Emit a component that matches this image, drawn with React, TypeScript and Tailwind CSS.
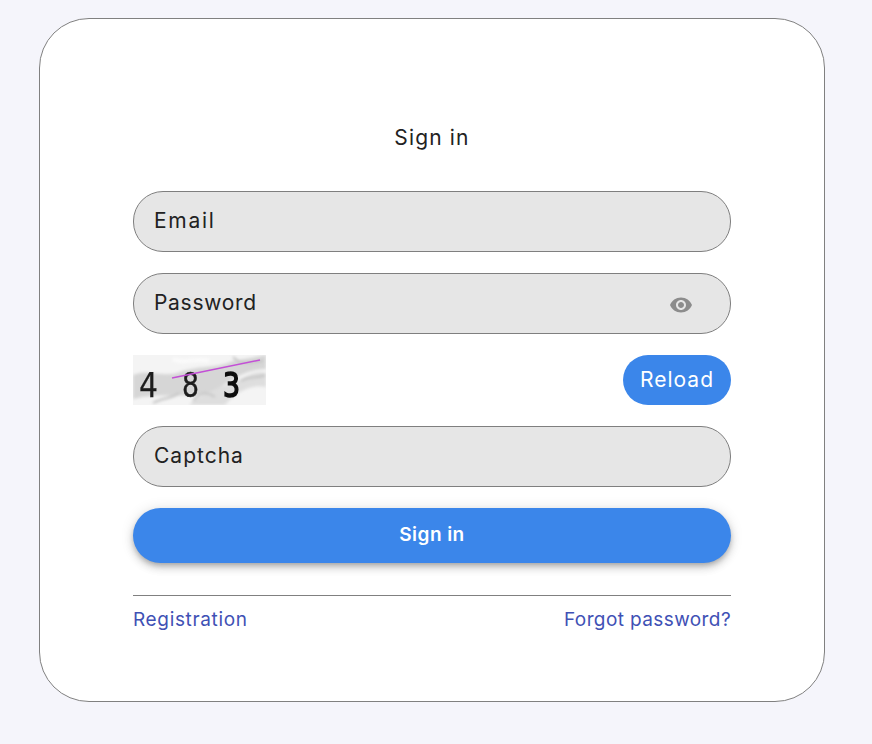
function Field({ label, spacing, eye }: { label: string; spacing: string; eye?: boolean }) {
  return (
    <div className="h-[61px] w-full rounded-[30px] border border-[#7f7f7f] bg-[#e6e6e6] pl-5 pr-9 flex items-center justify-between text-[21px] text-[#222222]">
      <span className={`-mt-[2px] ${spacing}`}>{label}</span>
      {eye && (
        <svg viewBox="0 0 24 24" className="h-6 w-6 fill-[#8c8c8c] mt-[3px] mr-[1px]">
          <path d="M12 4.5C7 4.5 2.73 7.61 1 12c1.73 4.39 6 7.5 11 7.5s9.27-3.11 11-7.5c-1.73-4.39-6-7.5-11-7.5zM12 17c-2.76 0-5-2.24-5-5s2.24-5 5-5 5 2.24 5 5-2.24 5-5 5zm0-8c-1.66 0-3 1.34-3 3s1.34 3 3 3 3-1.34 3-3-1.34-3-3-3z" />
        </svg>
      )}
    </div>
  );
}

function CaptchaImage() {
  return (
    <svg viewBox="0 0 133 50" className="h-[50px] w-[133px] block">
      <defs>
        <filter id="soft" x="-5%" y="-5%" width="110%" height="110%">
          <feGaussianBlur stdDeviation="1.4" />
        </filter>
        <filter id="digit" x="-20%" y="-20%" width="140%" height="140%">
          <feGaussianBlur stdDeviation="0.45" />
        </filter>
      </defs>
      <rect width="133" height="50" fill="#f4f4f4" />
      <g filter="url(#soft)">
        <path d="M0 20 C14 14 30 22 44 18 C64 10 82 14 100 6 L133 0 L133 14 C112 14 98 26 84 34 C62 46 32 36 0 44 Z" fill="#d6d6d6" />
        <path d="M56 50 C70 36 92 32 112 22 C120 18 126 16 133 18 L133 32 C116 28 100 40 92 50 Z" fill="#dedede" />
        <path d="M100 2 C110 12 120 6 130 6 M108 26 C116 20 124 24 132 20 M60 46 C66 38 74 36 82 42 M20 48 C30 42 40 44 46 38" stroke="#c2c2c2" strokeWidth="2" fill="none" />
        <path d="M40 4 C52 10 62 2 76 6" stroke="#fbfbfb" strokeWidth="4" fill="none" />
      </g>
      <g filter="url(#digit)" fontFamily="'DejaVu Sans', sans-serif" fontSize="34">
        <text x="6" y="42" fill="#1c1c1c" stroke="#1c1c1c" strokeWidth="0.25" textLength="19" lengthAdjust="spacingAndGlyphs">4</text>
        <text x="49" y="42" fill="#1c1c1c" stroke="#1c1c1c" strokeWidth="0.45" textLength="17" lengthAdjust="spacingAndGlyphs">8</text>
        <text x="90" y="42" fill="#0d0d0d" stroke="#0d0d0d" strokeWidth="1.7" textLength="17" lengthAdjust="spacingAndGlyphs">3</text>
      </g>
      <line x1="39" y1="23" x2="127" y2="5" stroke="#c34fd6" strokeWidth="1.5" />
    </svg>
  );
}

export default function App() {
  return (
    <div className="min-h-screen bg-[#f5f5fb] pt-[18px] pl-[39px] font-['Inter','Liberation_Sans',sans-serif]">
      <div className="w-[786px] h-[684px] rounded-[50px] border border-[#808080] bg-white px-[93px] pt-[102px]">
        <h1 className="text-center text-[21px] leading-[34px] font-normal tracking-[1.15px] text-[#222222]">Sign in</h1>

        <div className="mt-[36px] flex flex-col gap-[21px]">
          <Field label="Email" spacing="tracking-[1.7px]" />
          <Field label="Password" spacing="tracking-[0.7px]" eye />
          <div className="flex items-center justify-between">
            <CaptchaImage />
            <button className="h-[50px] w-[108px] rounded-[25px] bg-[#3b86ea] text-[21px] tracking-[1px] text-white">
              Reload
            </button>
          </div>
          <Field label="Captcha" spacing="tracking-[1px]" />
          <button className="h-[55px] w-full rounded-[28px] bg-[#3b86ea] text-[19px] font-semibold tracking-[0.45px] text-white shadow-[0_3px_5px_-1px_rgba(0,0,0,0.2),0_5px_8px_0_rgba(0,0,0,0.14),0_1px_14px_0_rgba(0,0,0,0.12)]">
            Sign in
          </button>
        </div>

        <div className="mt-[32px] border-t border-[#808080] pt-[10px] flex justify-between text-[19px] leading-[28px] tracking-[0.4px] text-[#3f51b5]">
          <a className="tracking-[0.65px]">Registration</a>
          <a>Forgot password?</a>
        </div>
      </div>
    </div>
  );
}
